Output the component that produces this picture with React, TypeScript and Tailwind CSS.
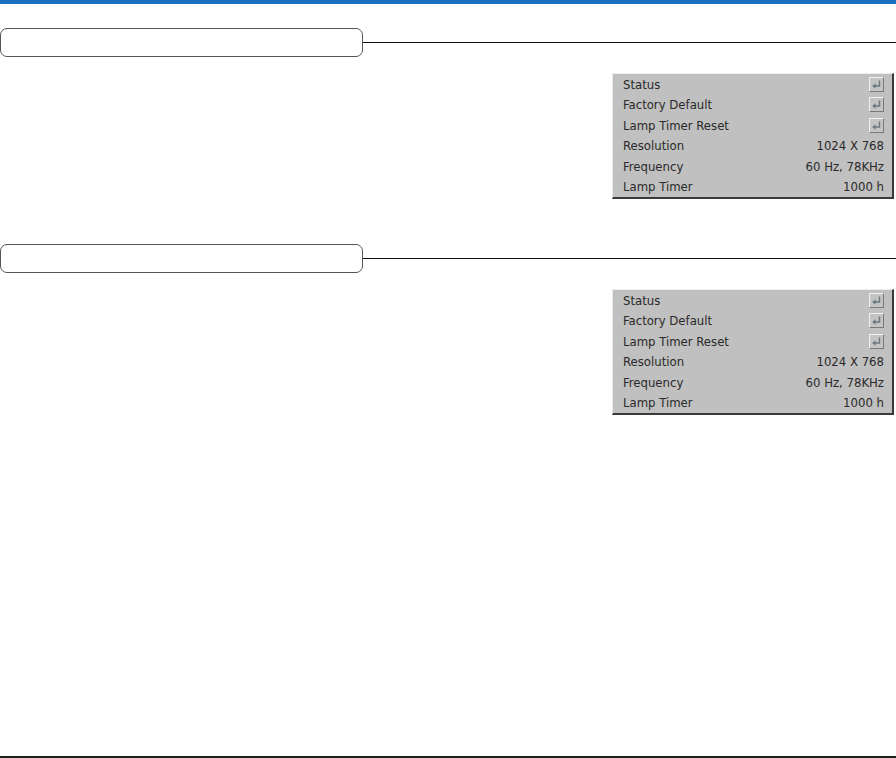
import React from "react";

type Row = { label: string; value?: string };

const rows: Row[] = [
  { label: "Status" },
  { label: "Factory Default" },
  { label: "Lamp Timer Reset" },
  { label: "Resolution", value: "1024 X 768" },
  { label: "Frequency", value: "60 Hz, 78KHz" },
  { label: "Lamp Timer", value: "1000 h" },
];

function EnterKey() {
  return (
    <span className="flex h-[15px] w-[15px] items-center justify-center border border-t-[#f2f2f2] border-l-[#f2f2f2] border-r-[#7a7a7a] border-b-[#7a7a7a] bg-[#c4c4c4]">
      <svg width="11" height="11" viewBox="0 0 11 11" fill="none">
        <path d="M8.5 1.5V7H3" stroke="#6a7880" strokeWidth="1.5" />
        <path d="M1.2 7L4.5 4.2V9.8Z" fill="#6a7880" />
      </svg>
    </span>
  );
}

function SectionHeader() {
  return (
    <div className="flex h-[29px] items-center">
      <div className="h-full w-[363px] shrink-0 rounded-[7px] border-[1.5px] border-[#555]" />
      <div className="h-px flex-1 bg-[#111]" />
    </div>
  );
}

function InfoPanel() {
  return (
    <div className="ml-auto mr-[2px] w-[282px] border-l border-t border-r-2 border-b-2 border-t-[#ececec] border-l-[#ececec] border-r-[#3a3a3a] border-b-[#3a3a3a] bg-[#c0c0c0] font-['DejaVu_Sans_Condensed','Liberation_Sans',sans-serif] text-[13px] text-[#2a2a2a]">
      {rows.map((r) => (
        <div key={r.label} className="flex h-[20.5px] items-center justify-between pl-[10px] pr-[8px]">
          <span>{r.label}</span>
          {r.value ? <span>{r.value}</span> : <EnterKey />}
        </div>
      ))}
    </div>
  );
}

export default function App() {
  return (
    <div className="flex min-h-[758px] w-[896px] flex-col bg-white">
      <div className="h-[4px] bg-[#1a71c1]" />
      <div className="mt-[24px]">
        <SectionHeader />
      </div>
      <div className="mt-[16px]">
        <InfoPanel />
      </div>
      <div className="mt-[45px]">
        <SectionHeader />
      </div>
      <div className="mt-[16px]">
        <InfoPanel />
      </div>
      <div className="mt-auto h-[2px] bg-[#1e1e1e]" />
    </div>
  );
}
